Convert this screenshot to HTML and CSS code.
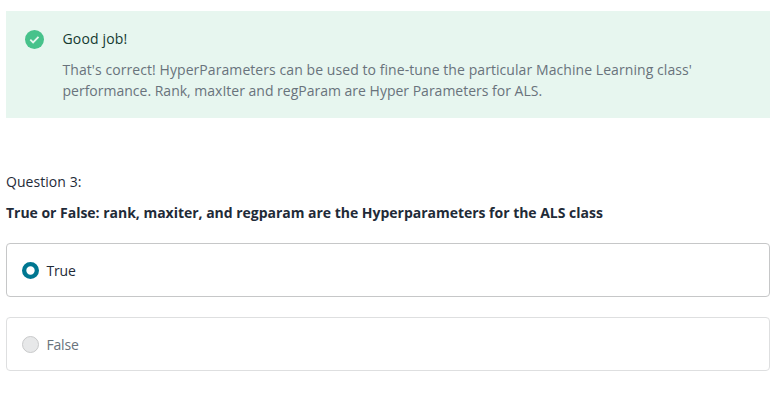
FILE: index.html
```
<!DOCTYPE html>
<html lang="en">
<head>
<meta charset="utf-8">
<title>Quiz</title>
<link rel="stylesheet" href="styles.css">
</head>
<body>
<main class="quiz">
  <section class="feedback">
    <svg class="check" viewBox="0 0 19 19"><circle cx="9.5" cy="9.5" r="9.5"/><path d="M5.3 9.7l2.8 2.7 5.4-5.5"/></svg>
    <div>
      <div class="feedback-title">Good job!</div>
      <p class="feedback-text"><span class="line-one">That's correct! HyperParameters can be used to fine-tune the particular Machine Learning class'</span><br><span class="line-two">performance. Rank, maxIter and regParam are Hyper Parameters for ALS.</span></p>
    </div>
  </section>
  <div class="number">Question 3:</div>
  <div class="prompt">True or False: rank, maxiter, and regparam are the Hyperparameters for the ALS class</div>
  <div class="option selected"><svg class="radio" viewBox="0 0 17 17"><circle cx="8.5" cy="8.5" r="6.35"/></svg><span class="label">True</span></div>
  <div class="option disabled"><svg class="radio" viewBox="0 0 17 17"><circle cx="8.5" cy="8.5" r="8"/></svg><span class="label">False</span></div>
</main>
</body>
</html>
```
FILE: styles.css
```
* { box-sizing: border-box; }
body {
  margin: 0;
  background: #fff;
  color: #1f2b38;
  font-family: "Open Sans", "Noto Sans", sans-serif;
  font-size: 14px;
  font-weight: 370;
  line-height: 21px;
}
.quiz { padding: 11px 10px 0 6px; }
.feedback {
  display: flex;
  height: 107px;
  padding: 17px 18px;
  background: #e7f6ef;
}
.check { flex: none; width: 19px; height: 19px; margin: 2px 18.5px 0 1px; }
.check circle { fill: #47c28b; }
.check path { fill: none; stroke: #e7f6ef; stroke-width: 1.8; }
.feedback-title { color: #143a30; letter-spacing: 0.15px; }
.feedback-text { margin: 10px 0 0; color: #69737c; white-space: nowrap; }
.line-one { letter-spacing: 0.07px; }
.number { margin-top: 53px; letter-spacing: 0.05px; }
.prompt { margin-top: 10px; font-weight: 700; letter-spacing: -0.02px; white-space: nowrap; }
.option {
  display: flex;
  align-items: center;
  height: 54px;
  margin-top: 20px;
  padding: 0 15px;
  border: 1px solid #c6c7c8;
  border-radius: 4px;
}
.radio {
  flex: none;
  width: 17px;
  height: 17px;
  margin-right: 7.5px;
}
.selected .radio circle { fill: #fff; stroke: #007791; stroke-width: 4.3; }
.label { letter-spacing: -0.2px; }
.disabled { border-color: #dedfe0; color: #69737c; }
.disabled .radio circle { fill: #e7e8e9; stroke: #c8c9ca; stroke-width: 1; }
```
